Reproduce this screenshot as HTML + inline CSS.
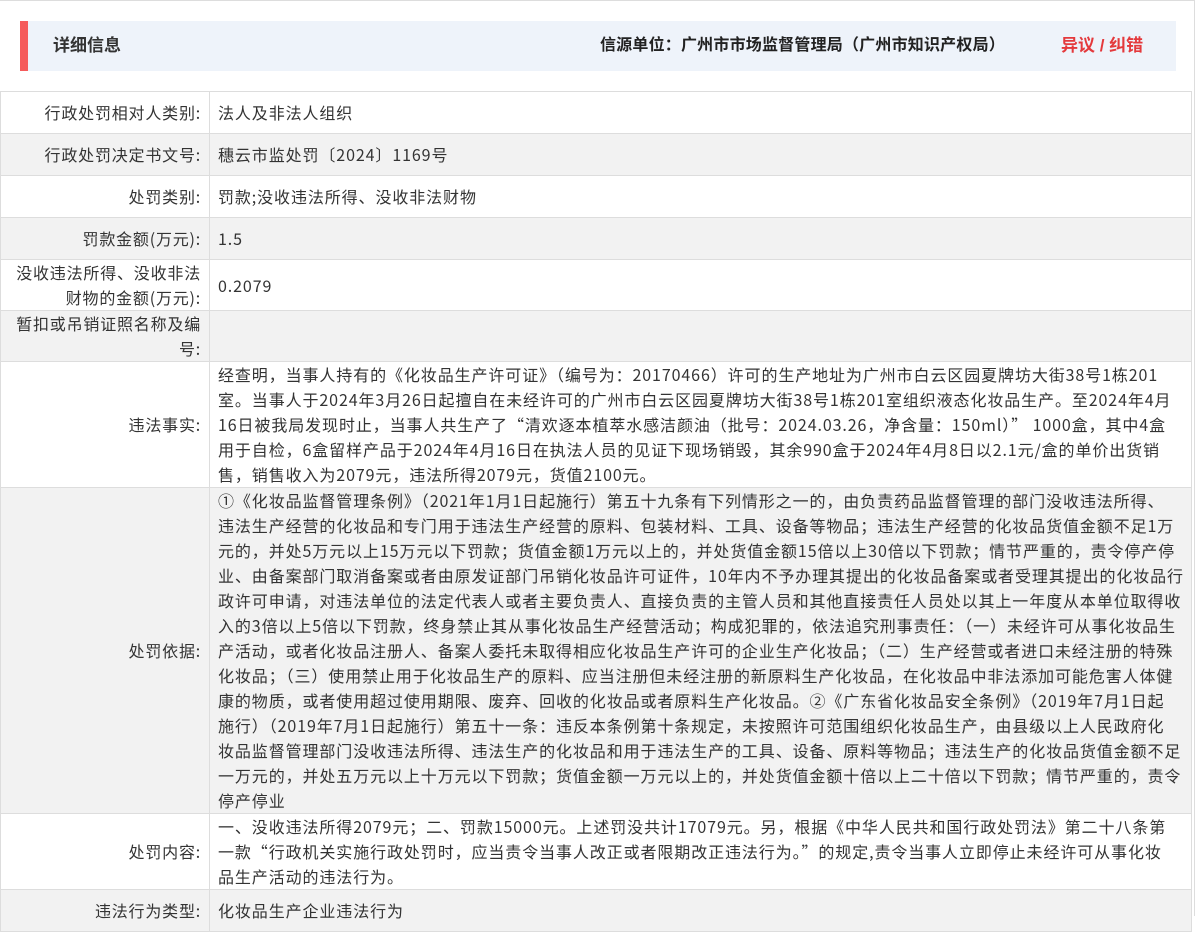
<!DOCTYPE html>
<html><head><meta charset="utf-8"><style>
body{margin:0;width:1198px;height:916px;overflow:hidden;background:#fff;font-family:"Liberation Sans","Noto Sans CJK SC",sans-serif;color:#333;position:relative}
.frame{position:absolute;left:0;top:0;width:1195px;height:916px;border-top:1px solid #ddd;border-right:1px solid #ddd;box-sizing:border-box}
.hd{position:absolute;left:20px;top:21px;width:1156px;height:50px;background:#eef3fa}
.hd .bar{position:absolute;left:0;top:0;width:8px;height:50px;background:#f55b5b}
.hd .t{position:absolute;left:33px;top:13px;font-size:17px;font-weight:bold;line-height:24px}
.hd .src{position:absolute;right:171px;top:13px;font-size:16px;font-weight:bold;line-height:24px;color:#222;letter-spacing:0.2px}
.hd .err{position:absolute;left:1041px;top:13px;font-size:17px;font-weight:bold;line-height:24px;color:#e4393c}
table{position:absolute;left:0;top:91px;width:1192px;border-collapse:collapse;font-size:16px;line-height:25px;letter-spacing:0.9px;font-family:"Noto Sans CJK SC","Liberation Sans",sans-serif;table-layout:fixed}
td{border:1px solid #ddd;padding:0;vertical-align:middle;overflow:hidden}
td.l{width:200px;text-align:right;padding-right:8px;letter-spacing:0.8px}
td.v{padding-left:8px;white-space:nowrap}
tr.g td{background:#f2f2f2}
</style></head><body>
<div class="frame"></div>
<div class="hd"><div class="bar"></div><div class="t">详细信息</div><div class="src">信源单位：广州市市场监督管理局（广州市知识产权局）</div><div class="err">异议 / 纠错</div></div>
<table>
<colgroup><col style="width:209px"><col></colgroup>
<tr style="height:42px"><td class="l">行政处罚相对人类别:</td><td class="v">法人及非法人组织</td></tr>
<tr class="g" style="height:42px"><td class="l">行政处罚决定书文号:</td><td class="v">穗云市监处罚〔2024〕1169号</td></tr>
<tr style="height:42px"><td class="l">处罚类别:</td><td class="v">罚款;没收违法所得、没收非法财物</td></tr>
<tr class="g" style="height:42px"><td class="l">罚款金额(万元):</td><td class="v">1.5</td></tr>
<tr style="height:51px"><td class="l">没收违法所得、没收非法<br>财物的金额(万元):</td><td class="v">0.2079</td></tr>
<tr class="g" style="height:51px"><td class="l">暂扣或吊销证照名称及编<br>号:</td><td class="v"></td></tr>
<tr style="height:126px"><td class="l">违法事实:</td><td class="v">经查明，当事人持有的《化妆品生产许可证》（编号为：20170466）许可的生产地址为广州市白云区园夏牌坊大街38号1栋201<br>室。当事人于2024年3月26日起擅自在未经许可的广州市白云区园夏牌坊大街38号1栋201室组织液态化妆品生产。至2024年4月<br>16日被我局发现时止，当事人共生产了“清欢逐本植萃水感洁颜油（批号：2024.03.26，净含量：150ml）” 1000盒，其中4盒<br>用于自检，6盒留样产品于2024年4月16日在执法人员的见证下现场销毁，其余990盒于2024年4月8日以2.1元/盒的单价出货销<br>售，销售收入为2079元，违法所得2079元，货值2100元。</td></tr>
<tr class="g" style="height:326px"><td class="l">处罚依据:</td><td class="v">①《化妆品监督管理条例》（2021年1月1日起施行）第五十九条有下列情形之一的，由负责药品监督管理的部门没收违法所得、<br>违法生产经营的化妆品和专门用于违法生产经营的原料、包装材料、工具、设备等物品；违法生产经营的化妆品货值金额不足1万<br>元的，并处5万元以上15万元以下罚款；货值金额1万元以上的，并处货值金额15倍以上30倍以下罚款；情节严重的，责令停产停<br>业、由备案部门取消备案或者由原发证部门吊销化妆品许可证件，10年内不予办理其提出的化妆品备案或者受理其提出的化妆品行<br>政许可申请，对违法单位的法定代表人或者主要负责人、直接负责的主管人员和其他直接责任人员处以其上一年度从本单位取得收<br>入的3倍以上5倍以下罚款，终身禁止其从事化妆品生产经营活动；构成犯罪的，依法追究刑事责任：（一）未经许可从事化妆品生<br>产活动，或者化妆品注册人、备案人委托未取得相应化妆品生产许可的企业生产化妆品；（二）生产经营或者进口未经注册的特殊<br>化妆品；（三）使用禁止用于化妆品生产的原料、应当注册但未经注册的新原料生产化妆品，在化妆品中非法添加可能危害人体健<br>康的物质，或者使用超过使用期限、废弃、回收的化妆品或者原料生产化妆品。②《广东省化妆品安全条例》（2019年7月1日起<br>施行）（2019年7月1日起施行）第五十一条：违反本条例第十条规定，未按照许可范围组织化妆品生产，由县级以上人民政府化<br>妆品监督管理部门没收违法所得、违法生产的化妆品和用于违法生产的工具、设备、原料等物品；违法生产的化妆品货值金额不足<br>一万元的，并处五万元以上十万元以下罚款；货值金额一万元以上的，并处货值金额十倍以上二十倍以下罚款；情节严重的，责令<br>停产停业</td></tr>
<tr style="height:76px"><td class="l">处罚内容:</td><td class="v">一、没收违法所得2079元；二、罚款15000元。上述罚没共计17079元。另，根据《中华人民共和国行政处罚法》第二十八条第<br>一款“行政机关实施行政处罚时，应当责令当事人改正或者限期改正违法行为。”的规定,责令当事人立即停止未经许可从事化妆<br>品生产活动的违法行为。</td></tr>
<tr class="g" style="height:42px"><td class="l">违法行为类型:</td><td class="v">化妆品生产企业违法行为</td></tr>
</table>
</body></html>
